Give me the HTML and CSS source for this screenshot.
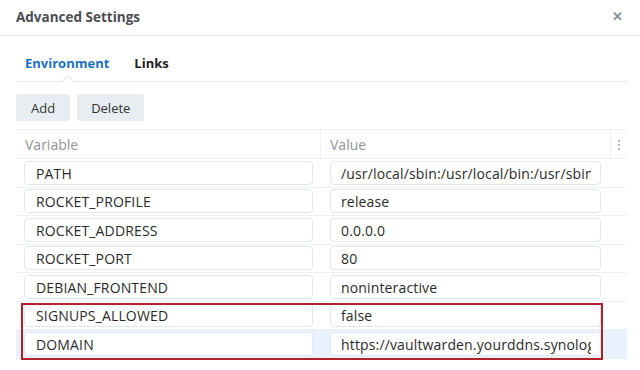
FILE: index.html
```html
<!DOCTYPE html>
<html lang="en">
<head>
  <meta charset="UTF-8">
  <title>Advanced Settings</title>
  <link rel="stylesheet" href="styles.css">
</head>
<body>

<div class="dialog">
  <div class="dialog-head">
    <span class="title">Advanced Settings</span>
    <span class="close">&#x2715;</span>
  </div>

  <div class="tabs">
    <span class="tab active">Environment</span>
    <span class="tab">Links</span>
  </div>

  <div class="toolbar">
    <button class="btn">Add</button>
    <button class="btn">Delete</button>
  </div>

  <div class="grid">
    <div class="row head">
      <div class="cell var">Variable</div>
      <div class="cell val">Value</div>
      <div class="cell menu"><span class="kebab"></span></div>
    </div>
    <div class="row"><div class="cell var"><div class="field"><span>PATH</span></div></div><div class="cell val"><div class="field"><span>/usr/local/sbin:/usr/local/bin:/usr/sbin:/usr/bin:/sbin:/bin</span></div></div><div class="cell menu"></div></div>
    <div class="row"><div class="cell var"><div class="field"><span>ROCKET_PROFILE</span></div></div><div class="cell val"><div class="field"><span>release</span></div></div><div class="cell menu"></div></div>
    <div class="row"><div class="cell var"><div class="field"><span>ROCKET_ADDRESS</span></div></div><div class="cell val"><div class="field"><span>0.0.0.0</span></div></div><div class="cell menu"></div></div>
    <div class="row"><div class="cell var"><div class="field"><span>ROCKET_PORT</span></div></div><div class="cell val"><div class="field"><span>80</span></div></div><div class="cell menu"></div></div>
    <div class="row"><div class="cell var"><div class="field"><span>DEBIAN_FRONTEND</span></div></div><div class="cell val"><div class="field"><span>noninteractive</span></div></div><div class="cell menu"></div></div>
    <div class="row"><div class="cell var"><div class="field"><span>SIGNUPS_ALLOWED</span></div></div><div class="cell val"><div class="field"><span>false</span></div></div><div class="cell menu"></div></div>
    <div class="row selected"><div class="cell var"><div class="field"><span>DOMAIN</span></div></div><div class="cell val"><div class="field"><span>https://vaultwarden.yourddns.synology.me</span></div></div><div class="cell menu"></div></div>

    <div class="highlight"></div>
  </div>
</div>

</body>
</html>
```

FILE: styles.css
```css
* { box-sizing: border-box; }
body {
  margin: 0;
  background: #fff;
  font-family: 'Open Sans', 'Noto Sans', sans-serif;
  font-size: 14px;
  color: #2b2b2b;
  overflow: hidden;
}
.dialog {
  width: 640px;
  height: 370px;
}
.dialog-head {
  height: 36px;
  padding: 0 16px;
  display: flex;
  align-items: center;
  justify-content: space-between;
  border-bottom: 1px solid #e6e9ec;
}
.title {
  font-weight: 700;
  color: #4a4d52;
  font-size: 13.5px;
  margin-top: -2px;
}
.close {
  color: #8a8f96;
  font-size: 13px;
  font-weight: 700;
  margin-right: 1px;
  margin-top: -4px;
}
.tabs {
  margin: 0 13px 0 16px;
  padding: 18px 0 9px 9px;
  display: flex;
  gap: 25px;
  border-bottom: 1px solid #e3e6ea;
}
.tab {
  position: relative;
  font-size: 13px;
  font-weight: 700;
  line-height: 18px;
  color: #222;
}
.tab.active { color: #1a70c4; }
.tab.active::after {
  content: "";
  position: absolute;
  left: 50%;
  bottom: -14px;
  width: 8px;
  height: 8px;
  margin-left: -4px;
  background: #fff;
  border-left: 1px solid #e3e6ea;
  border-top: 1px solid #e3e6ea;
  transform: rotate(45deg);
}
.toolbar {
  padding: 12px 16px 0;
  display: flex;
  gap: 7px;
}
.btn {
  height: 27px;
  padding: 0 15px;
  border: none;
  border-radius: 3px;
  background: #e8edf2;
  color: #333;
  font-family: inherit;
  font-size: 13px;
}
.btn + .btn { padding: 0 14px; }
.grid {
  position: relative;
  margin: 8px 13px 0 16px;
  border-top: 1px solid #eef0f3;
}
.row {
  display: flex;
  height: 28.5px;
  border-bottom: 1px solid #eef0f3;
}
.row.head {
  height: 29px;
  color: #8f949b;
}
.row.head .cell { padding-top: 1px; }
.row.selected { background: #e8f1fc; }
.cell {
  display: flex;
  align-items: center;
  min-width: 0;
}
.cell.var { width: 305px; padding: 0 8px; }
.cell.val { width: 289px; padding: 0 9px; }
.cell.menu { width: 17px; justify-content: center; }
.head .cell.var { padding-left: 9px; border-right: 1px solid #eef0f3; }
.head .cell.menu { border-left: 1px solid #eef0f3; }
.field {
  width: 100%;
  height: 24px;
  padding: 1px 11px 0;
  border: 1px solid #e3e6ea;
  border-radius: 4px;
  background: #fff;
}
.field span {
  display: block;
  line-height: 21px;
  letter-spacing: 0.15px;
  white-space: nowrap;
  overflow: hidden;
}
.val .field { padding: 1px 9px 0 10px; }
.kebab,
.kebab::before,
.kebab::after {
  display: block;
  width: 2px;
  height: 2px;
  border-radius: 1px;
  background: #9a9fa6;
}
.kebab { position: relative; }
.kebab::before,
.kebab::after {
  content: "";
  position: absolute;
  left: 0;
}
.kebab::before { top: -4px; }
.kebab::after { top: 4px; }
.highlight {
  position: absolute;
  left: 5px;
  top: 173px;
  width: 582px;
  height: 57px;
  border: 2px solid #b3202a;
  pointer-events: none;
}
```
